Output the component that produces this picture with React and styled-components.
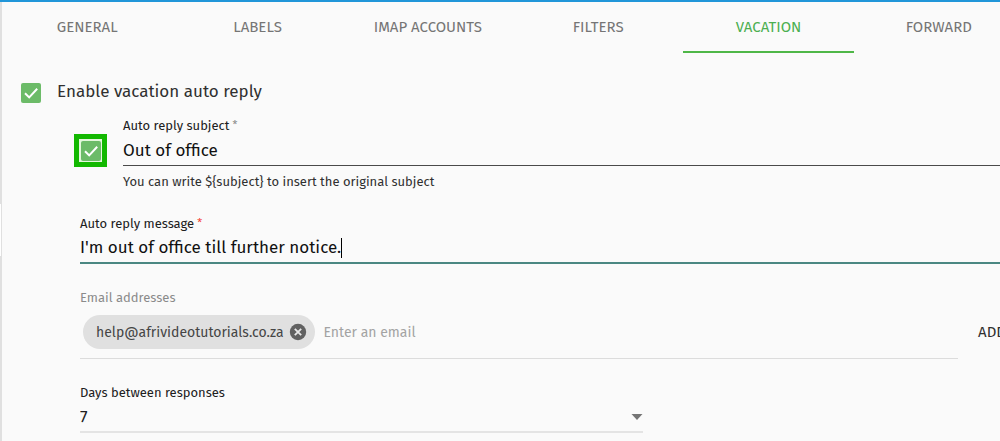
import React from 'react'
import styled, { createGlobalStyle } from 'styled-components'

const GlobalStyle = createGlobalStyle`
*{
box-sizing:border-box;
}
body{
margin:0;
background:#fafafa;
overflow:hidden;
}
body, input, select, button{
font-family:"Fira Sans", "Noto Sans", "Open Sans", sans-serif;
}
`

const tabs = ['General', 'Labels', 'IMAP accounts', 'Filters', 'Vacation', 'Forward']

function Tick({ id, label }) {
  return (
    <TickBox>
        <TickInput type="checkbox" id={id} aria-label={label} defaultChecked />
        <TickMark viewBox="0 0 20 20" aria-hidden="true">
            <path d="M4 10.2 8.2 14.4 16.2 5.8" />
        </TickMark>
    </TickBox>
  )
}

function App() {
  return (
    <Page>
        <GlobalStyle />
        <Edge>
            <Thumb />
        </Edge>
        <Main>
            <Tabs role="tablist">
                {tabs.map((tab) => (
                    <Tab key={tab} role="tab" aria-selected={tab === 'Vacation'} $active={tab === 'Vacation'}>
                        {tab}
                    </Tab>
                ))}
            </Tabs>
            <Form>
                <EnableRow>
                    <Tick id="enable" />
                    <EnableLabel htmlFor="enable">Enable vacation auto reply</EnableLabel>
                </EnableRow>
                <SubjectRow>
                    <Highlight>
                        <Tick id="use-subject" label="Use auto reply subject" />
                    </Highlight>
                    <Field>
                        <Label htmlFor="subject">Auto reply subject<Star>*</Star></Label>
                        <Line $color="#4a4a4a">
                            <TextInput id="subject" defaultValue="Out of office" />
                        </Line>
                        <Hint>{'You can write ${subject} to insert the original subject'}</Hint>
                    </Field>
                </SubjectRow>
                <Indent>
                    <Field>
                        <Label htmlFor="message">Auto reply message<Star $required>*</Star></Label>
                        <Line $color="#4a8782" $thick>
                            <GrowInput id="message" defaultValue="I'm out of office till further notice." />
                            <Caret />
                        </Line>
                    </Field>
                    <EmailField>
                        <Label htmlFor="email" $muted>Email addresses</Label>
                        <EmailRow>
                            <Chips>
                                <Chip>
                                    help@afrivideotutorials.co.za
                                    <Remove type="button" aria-label="Remove">
                                        <svg viewBox="0 0 18 18" width="18" height="18" aria-hidden="true">
                                            <circle cx="9" cy="9" r="8.2" fill="#616161" />
                                            <path d="M5.8 5.8 12.2 12.2M12.2 5.8 5.8 12.2" stroke="#e8e8e8" strokeWidth="1.8" />
                                        </svg>
                                    </Remove>
                                </Chip>
                                <EmailInput id="email" placeholder="Enter an email" />
                            </Chips>
                            <AddButton type="button">Add</AddButton>
                        </EmailRow>
                    </EmailField>
                    <DaysField>
                        <Label htmlFor="days">Days between responses</Label>
                        <SelectLine>
                            <Select id="days" defaultValue="7">
                                <option>7</option>
                            </Select>
                            <svg viewBox="0 0 12 6" width="12" height="6" aria-hidden="true">
                                <path d="M0.5 0H11.5L6 6Z" fill="#757575" />
                            </svg>
                        </SelectLine>
                    </DaysField>
                </Indent>
            </Form>
        </Main>
    </Page>
  )
}

export default App

const Page=styled.div`
display:flex;
min-height:100vh;
background:#fafafa;
border-top:2px solid #2196d9; //blue bar of the app header
overflow:hidden;
`;

const Edge=styled.div`
flex:0 0 2px;
background:#e0e0e0;
`;

//scroll thumb of the side menu
const Thumb=styled.div`
width:1px;
height:52px;
margin-top:202px;
background:#fff;
`;

const Main=styled.main`
flex:1;
min-width:0;
`;

const Tabs=styled.div`
display:flex;
width:calc(100% + 24px); //the last tab runs off the page
`;

const Tab=styled.button`
flex:1 1 0;
height:51px;
padding:0;
border:0;
border-bottom:2px solid ${(props) => (props.$active ? '#4fb748' : 'transparent')};
background:none;
color:${(props) => (props.$active ? '#4caf50' : '#757575')};
font-size:15px;
line-height:20px;
text-transform:uppercase;
cursor:pointer;
`;

const Form=styled.form`
padding:28px 0 0 19px;
`;

const EnableRow=styled.div`
display:flex;
align-items:center;
gap:16px;
height:24px;
`;

const EnableLabel=styled.label`
padding-bottom:2px;
color:#303030;
font-size:17px;
line-height:22px;
`;

const TickBox=styled.span`
display:grid;
width:20px;
height:20px;
`;

const TickInput=styled.input`
grid-area:1 / 1;
appearance:none;
width:20px;
height:20px;
margin:0;
border-radius:2px;
background:#6cbb68;
`;

const TickMark=styled.svg`
grid-area:1 / 1;
fill:none;
stroke:#fff;
stroke-width:2;
pointer-events:none;
`;

const SubjectRow=styled.div`
display:flex;
gap:16px;
margin-top:11px;
padding-left:53px;
`;

const Highlight=styled.div`
display:flex;
align-items:center;
justify-content:center;
width:33px;
height:33px;
margin-top:18px;
border:5px solid #12b800;
background:#e4f7dc;
`;

const Field=styled.div`
flex:1;
`;

const Label=styled.label`
display:block;
color:${(props) => (props.$muted ? '#8a8a8a' : '#202020')};
font-size:13px;
line-height:20px;
`;

const Star=styled.span`
margin-left:3px;
color:${(props) => (props.$required ? '#f44336' : '#8a8a8a')};
font-size:11px;
line-height:1;
vertical-align:2px;
`;

const Line=styled.div`
display:flex;
align-items:center;
border-bottom:${(props) => (props.$thick ? 2 : 1)}px solid ${(props) => props.$color};
`;

const TextInput=styled.input`
width:100%;
height:29px;
padding:0 0 1px;
border:0;
outline:0;
background:none;
color:#101010;
font-size:17px;
`;

const GrowInput=styled(TextInput)`
width:auto;
height:28px;
field-sizing:content;
`;

const Caret=styled.span`
width:1px;
height:20px;
background:#000;
`;

const Hint=styled.div`
margin-top:6px;
color:#303030;
font-size:13px;
line-height:20px;
`;

const Indent=styled.div`
padding:22px 0 0 59px;
`;

const EmailField=styled.div`
margin-top:24px;
`;

const EmailRow=styled.div`
display:flex;
gap:20px;
width:calc(100% + 6px); //add button is cut by the page
`;

const Chips=styled.div`
flex:1;
display:flex;
align-items:center;
gap:9px;
padding:7px 0 9px 3px;
border-bottom:1px solid #dcdcdc;
`;

const Chip=styled.div`
display:flex;
align-items:center;
gap:5px;
height:34px;
padding:0 8px 0 13px;
border-radius:17px;
background:#e0e0e0;
color:#454545;
font-size:14px;
`;

const Remove=styled.button`
display:flex;
padding:0;
border:0;
background:none;
cursor:pointer;
`;

const EmailInput=styled(TextInput)`
flex:1;
font-size:14px;
padding:0;
&::placeholder{
color:#a3a3a3;
opacity:1;
}
`;

const AddButton=styled.button`
padding:0 0 3px;
border:0;
background:none;
color:#303030;
font-size:15px;
text-transform:uppercase;
`;

const DaysField=styled.div`
width:calc(61% + 2px);
margin-top:24px;
`;

const SelectLine=styled.div`
display:flex;
align-items:center;
border-bottom:2px solid #e4e4e4;
`;

const Select=styled.select`
flex:1;
height:28px;
padding:0;
border:0;
appearance:none;
background:none;
color:#202020;
font-size:17px;
`;
